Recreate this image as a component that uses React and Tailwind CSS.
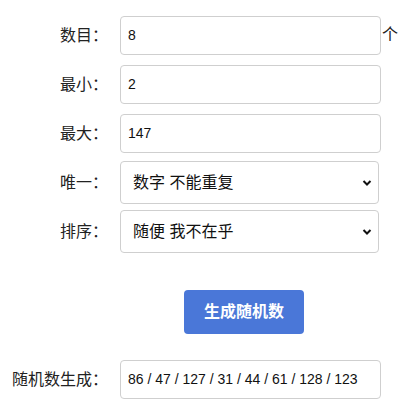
import React from "react";

const font = { fontFamily: '"Liberation Sans", "Noto Sans CJK SC", sans-serif' };

function Label({ children }) {
  return (
    <div className="w-[100px] shrink-0 text-right text-[16px] text-[#222] whitespace-nowrap">
      {children}
      <span className="inline-block w-[8px] overflow-visible text-left">：</span>
    </div>
  );
}

function Chevron() {
  return (
    <svg className="absolute right-[6px] top-1/2 -translate-y-1/2" width="10" height="7" viewBox="0 0 10 7">
      <path d="M1.5 1.5 L5 5 L8.5 1.5" fill="none" stroke="#111" strokeWidth="2" />
    </svg>
  );
}

export default function App() {
  return (
    <div className="w-[420px] h-[412px] bg-white pt-[16px]" style={font}>
      <div className="flex items-center h-[39px]">
        <Label>数目</Label>
        <div className="ml-[20px] w-[261px] h-[39px] border border-[#cfcfcf] rounded-[4px] flex items-center pl-[7px] text-[14px] text-[#111]">8</div>
        <span className="text-[16px] text-[#222] ml-[1px] -mt-[2px]">个</span>
      </div>
      <div className="flex items-center h-[39px] mt-[10px]">
        <Label>最小</Label>
        <div className="ml-[20px] w-[261px] h-[39px] border border-[#cfcfcf] rounded-[4px] flex items-center pl-[7px] text-[14px] text-[#111]">2</div>
      </div>
      <div className="flex items-center h-[39px] mt-[10px]">
        <Label>最大</Label>
        <div className="ml-[20px] w-[261px] h-[39px] border border-[#cfcfcf] rounded-[4px] flex items-center pl-[7px] text-[14px] text-[#111]">147</div>
      </div>
      <div className="flex items-center h-[43px] mt-[8px]">
        <Label>唯一</Label>
        <div className="relative ml-[20px] w-[259px] h-[43px] border border-[#cfcfcf] rounded-[4px] flex items-center pl-[12px] text-[16px] text-[#111]">
          数字 不能重复
          <Chevron />
        </div>
      </div>
      <div className="flex items-center h-[43px] mt-[6px]">
        <Label>排序</Label>
        <div className="relative ml-[20px] w-[259px] h-[43px] border border-[#cfcfcf] rounded-[4px] flex items-center pl-[12px] text-[16px] text-[#111]">
          随便 我不在乎
          <Chevron />
        </div>
      </div>
      <div className="flex mt-[37px] pl-[184px]">
        <div className="w-[120px] h-[44px] rounded-[4px] bg-[#4a77d8] text-white text-[16px] font-bold flex items-center justify-center">生成随机数</div>
      </div>
      <div className="flex items-center h-[39px] mt-[26px]">
        <Label>随机数生成</Label>
        <div className="ml-[20px] w-[261px] h-[39px] border border-[#cfcfcf] rounded-[4px] flex items-center pl-[7px] text-[14px] text-[#111]">86 / 47 / 127 / 31 / 44 / 61 / 128 / 123</div>
      </div>
    </div>
  );
}
